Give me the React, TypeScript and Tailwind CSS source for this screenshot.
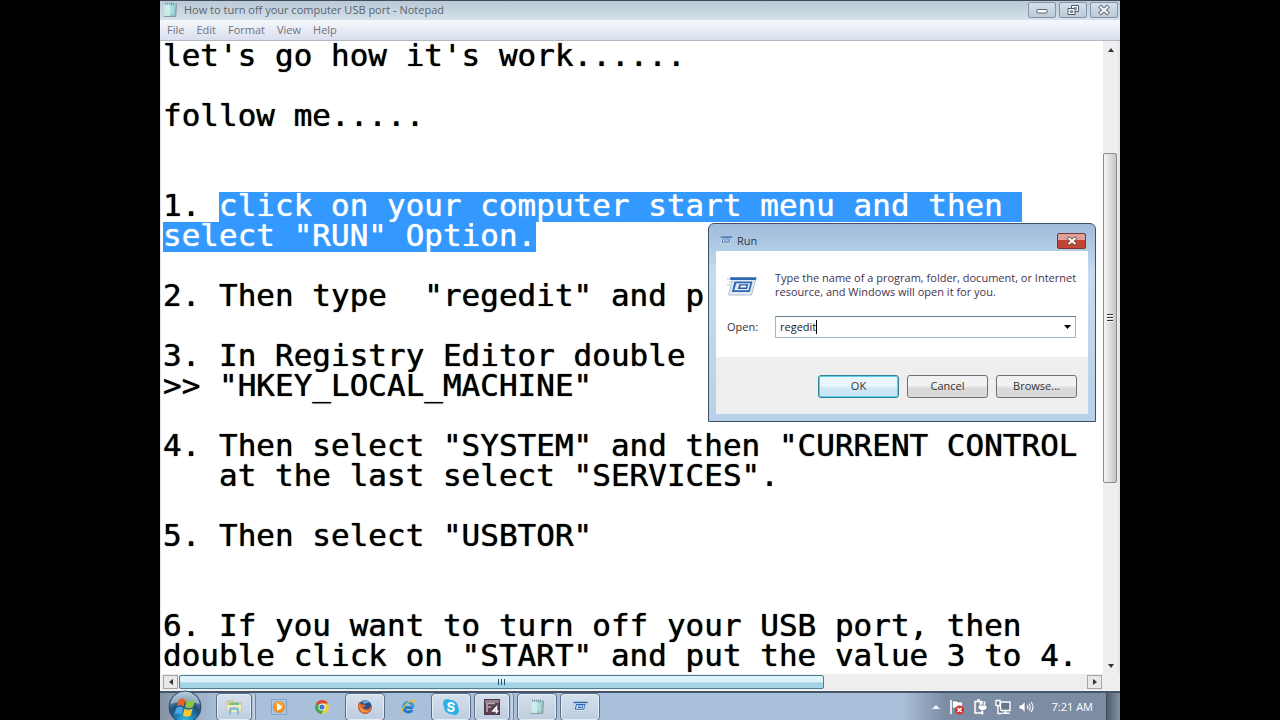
import type { ReactNode } from 'react';

const documentLines: ReactNode[] = [
  "let's go how it's work......",
  '',
  'follow me.....',
  '',
  '',
  <>
    1. <Selected>{'click on your computer start menu and then '}</Selected>
  </>,
  <Selected>select "RUN" Option.</Selected>,
  '',
  '2. Then type  "regedit" and p',
  '',
  '3. In Registry Editor double',
  '>> "HKEY_LOCAL_MACHINE"',
  '',
  '4. Then select "SYSTEM" and then "CURRENT CONTROL',
  '   at the last select "SERVICES".',
  '',
  '5. Then select "USBTOR"',
  '',
  '',
  '6. If you want to turn off your USB port, then',
  'double click on "START" and put the value 3 to 4.',
];

function Selected({ children }: { children: ReactNode }) {
  return <mark className="inline-block h-[30px] bg-[#3399ff] text-white">{children}</mark>;
}

function NotepadIcon({ className }: { className: string }) {
  return (
    <svg viewBox="0 0 16 16" className={className} aria-hidden="true">
      <path d="M2.500 1.500h12.500l-.8 13.500H1.500z" fill="#8b9a9f" />
      <path d="M2 1.500h11.500l-.5 12.500H1.500z" fill="#c3e8e8" />
      <path d="M8.500 1.500h5l-.5 12.500H8z" fill="#8ccdd0" />
      <path d="M3.500 5h8.500M3.400 7h8.500M3.300 9h8.500M3.200 11h8.500" stroke="#e6f7f6" strokeWidth=".7" />
      <path d="M3.500 .8v1.800M5.500 .8v1.800M7.500 .8v1.800M9.500 .8v1.800M11.500 .8v1.800" stroke="#5f7f86" strokeWidth=".8" />
    </svg>
  );
}

function RunIcon({ className }: { className: string }) {
  return (
    <svg viewBox="0 0 30 20" className={className} aria-hidden="true">
      <path d="M5.500 2.500H29L24.500 19H1.500z" fill="#e4eaf0" stroke="#9db4c4" strokeWidth=".8" />
      <path d="M0 3h5M1.500 6h3M0 9h3" stroke="#a9cbe4" />
      <path d="M3 1.200H29.500L28.800 4H3.500z" fill="#2f67ae" />
      <path d="M7.500 5.500H25.500L22.800 16H4.800z" fill="#2d68b4" />
      <path d="M9.300 7.200H23.300L21.500 14.300H7.200z" fill="#d6e8f8" />
      <path d="M12.300 8.300H21.200L20 12.900H11z" fill="#2c5ba2" />
      <path d="M13.800 9.600H19.400L18.900 11.600H13.200z" fill="#f4f9ff" />
    </svg>
  );
}

function ExplorerIcon() {
  return (
    <svg viewBox="0 0 18 18" className="h-[18px] w-[18px]" aria-hidden="true">
      <path d="M2 3h6l1 2h7v8H2z" fill="#e6dc9a" stroke="#b7ad6a" strokeWidth=".6" />
      <path d="M4 4.500h10v3H4z" fill="#7fbf86" />
      <path d="M1.500 7h15l-1 7h-13z" fill="#f1ebb8" />
      <path d="M5 16.500v-4q0-2 2-2h4q2 0 2 2v4" fill="none" stroke="#7fbcd8" strokeWidth="2.400" />
    </svg>
  );
}

function MediaIcon() {
  return (
    <svg viewBox="0 0 16 16" className="h-4 w-4" aria-hidden="true">
      <rect x=".5" y=".5" width="15" height="15" fill="#a8c6e4" stroke="#7fa3cb" />
      <circle cx="8" cy="8" r="6" fill="#ee8b1d" />
      <circle cx="8" cy="7" r="4.500" fill="#f7a63c" />
      <path d="M6 4l5.500 4L6 12z" fill="#fff" />
    </svg>
  );
}

function ChromeIcon() {
  return (
    <svg viewBox="0 0 16 16" className="h-4 w-4" aria-hidden="true">
      <circle cx="8" cy="8" r="7" fill="#f2cc35" />
      <path d="M8 8 1.900 4.500A7 7 0 0 1 14.100 4.500H8z" fill="#d9483b" />
      <path d="M1.900 4.500A7 7 0 0 0 7.500 15L10.500 9.500 8 8z" fill="#46a556" />
      <circle cx="8" cy="8" r="3.500" fill="#fff" />
      <circle cx="8" cy="8" r="2.600" fill="#3f78c4" />
    </svg>
  );
}

function FirefoxIcon() {
  return (
    <svg viewBox="0 0 16 16" className="h-4 w-4" aria-hidden="true">
      <circle cx="8" cy="8" r="6.800" fill="#2b4f86" />
      <path d="M5 3q4-3 8 1-3-1-5 1z" fill="#68a9d8" />
      <path d="M1.500 4Q0 9 3 12.500q4 4 9 1Q16 10 14.500 5q-.5 4-3.500 5-4 1-5-2l3-1q-1-2-4-1.500Q3 5 3 3z" fill="#e0662a" />
      <path d="M2 6q0 5 4 7 4 1 7-2-5 2-8-1Q3 8 2 6z" fill="#f3a33a" />
    </svg>
  );
}

function ExplorerBrowserIcon() {
  return (
    <svg viewBox="0 0 18 18" className="h-[18px] w-[18px]" aria-hidden="true">
      <path d="M14 9.700H4.800Q5.200 14 9.200 14q2.800 0 4-2" fill="none" stroke="#2479c6" strokeWidth="2.800" />
      <path d="M4.500 10Q4.500 4.500 9.200 4.500q4.800 0 4.800 5.200" fill="none" stroke="#3d98dc" strokeWidth="2.800" />
      <path d="M3.500 17q-4-1 .5-8 5-7 11-7.500 3.500 1 .5 5 .8-3-1.500-3-4 0-8 5-4 6-2.500 8.500z" fill="#e9bd3c" />
    </svg>
  );
}

function SkypeIcon() {
  return (
    <svg viewBox="0 0 18 18" className="h-[18px] w-[18px]" aria-hidden="true">
      <circle cx="9" cy="9" r="7" fill="#2bb1e4" />
      <circle cx="5.500" cy="5.500" r="4.500" fill="#2bb1e4" />
      <circle cx="12.500" cy="12.500" r="4.500" fill="#2bb1e4" />
      <path d="M12 6.500Q11 5 9 5 6.500 5 6.500 6.800T9 8.800t2.800 2Q11.800 13 9 13 6.800 13 6 11.300" fill="none" stroke="#fff" strokeWidth="2" strokeLinecap="round" />
    </svg>
  );
}

function FormatFactoryIcon() {
  return (
    <svg viewBox="0 0 16 16" className="h-4 w-4" aria-hidden="true">
      <rect x=".5" y=".5" width="15" height="15" fill="#5b4153" stroke="#4a3645" />
      <path d="M1 1h14v3H1z" fill="#937f8c" />
      <path d="M3 13V4.500H11M3 8H7" fill="none" stroke="#b9a3b1" strokeWidth="1.600" />
      <path d="M12.500 14.500V8L9 12H14.500" fill="none" stroke="#fff" strokeWidth="1.500" />
    </svg>
  );
}

function StartOrb() {
  return (
    <svg viewBox="0 0 34 34" className="h-[34px] w-[34px]" aria-hidden="true">
      <defs>
        <radialGradient id="orb" cx=".5" cy=".95" r=".9">
          <stop offset="0" stopColor="#2fc4ef" />
          <stop offset=".3" stopColor="#1f86bb" />
          <stop offset=".6" stopColor="#1d4f7c" />
          <stop offset="1" stopColor="#8ea6bd" />
        </radialGradient>
      </defs>
      <circle cx="17" cy="17" r="16" fill="url(#orb)" stroke="#2a4a68" />
      <path d="M2.500 14a14.700 14.700 0 0 1 29 0q-14.500-5-29 0z" fill="#dce8f2" opacity=".5" />
      <path d="M10.800 9.500q3.500-2.200 6.700.2L15.700 16.500q-3.500-2.500-7 0z" fill="#e8602c" />
      <path d="M18.700 10.300q4 2.200 8.300 0L25 17q-4 2.500-8 0z" fill="#8cc63f" />
      <path d="M8.300 18q3.500-2.500 7 0L13.500 25q-3.500-2.500-7 0z" fill="#4aa5e0" />
      <path d="M16.600 18.500q4 2.500 8 0L22.800 25.500q-4 2.500-8 0z" fill="#fbc733" />
    </svg>
  );
}

type TaskItem = { name: string; icon: ReactNode; open: boolean; stacked?: boolean };

const taskItems: TaskItem[] = [
  { name: 'Windows Explorer', icon: <ExplorerIcon />, open: true, stacked: true },
  { name: 'Media Player', icon: <MediaIcon />, open: false },
  { name: 'Chrome', icon: <ChromeIcon />, open: false },
  { name: 'Firefox', icon: <FirefoxIcon />, open: true },
  { name: 'Internet Explorer', icon: <ExplorerBrowserIcon />, open: false },
  { name: 'Skype', icon: <SkypeIcon />, open: true },
  { name: 'Format Factory', icon: <FormatFactoryIcon />, open: true, stacked: true },
  { name: 'Notepad', icon: <NotepadIcon className="h-4 w-4" />, open: true },
  { name: 'Run', icon: <RunIcon className="h-[11px] w-4" />, open: true },
];

function TaskButton({ item }: { item: TaskItem }) {
  const face = 'flex h-full min-w-0 flex-1 items-center justify-center';
  return (
    <button type="button" aria-label={item.name} className="flex h-7 w-10 gap-px">
      <span
        className={
          item.open
            ? `${face} rounded-sm border border-[#5d6d83] bg-linear-to-b from-[#d6e0ec] to-[#bccde0] shadow-[inset_0_0_0_1px_#e3ebf4]`
            : face
        }
      >
        {item.icon}
      </span>
      {item.stacked && <span className="h-full w-[3px] rounded-r-sm border-r border-[#6f8098] bg-[#c4d2e3]" />}
    </button>
  );
}

function TitleBar() {
  const button =
    'flex h-4 w-7 items-center justify-center rounded-xs border border-[#8495a8] bg-linear-to-b from-[#d3e0ea] to-[#bccbd9]';
  return (
    <header className="flex h-5 items-center border-t border-[#454b55] bg-linear-to-b from-[#b9c9d6] to-[#d4e1ea] pr-[2px] pb-px pl-[2px]">
      <NotepadIcon className="h-4 w-4" />
      <h1 className="ml-1.5 flex-1 text-[11px] leading-4 text-[#5d6269]">
        How to turn off your computer USB port - Notepad
      </h1>
      <div className="flex gap-[3px]">
        <button type="button" aria-label="Minimize" className={button}>
          <svg viewBox="0 0 12 12" className="h-3 w-3" aria-hidden="true">
            <rect x="1" y="5.500" width="10" height="3.500" rx=".5" fill="#fff" stroke="#5b6673" />
          </svg>
        </button>
        <button type="button" aria-label="Restore" className={button}>
          <svg viewBox="0 0 12 12" className="h-3 w-3" aria-hidden="true">
            <path d="M4.500 1.500h7v6h-7z" fill="#fff" stroke="#4d5866" />
            <path d="M7 3.500h2.500v2H7z" fill="#b8c6d4" stroke="#5b6673" strokeWidth=".7" />
            <path d="M1 4.500h7v6H1z" fill="#fff" stroke="#4d5866" />
            <path d="M3.300 6.700h2.400v1.800H3.300z" fill="#b8c6d4" stroke="#4d5866" strokeWidth=".8" />
          </svg>
        </button>
        <button type="button" aria-label="Close" className={button}>
          <svg viewBox="0 0 12 12" className="h-3 w-3" aria-hidden="true">
            <path d="M1.500 2l9 8M10.500 2l-9 8" stroke="#5b6673" strokeWidth="4" />
            <path d="M2 2.500l8 7M10 2.500l-8 7" stroke="#fff" strokeWidth="2.200" />
          </svg>
        </button>
      </div>
    </header>
  );
}

function VerticalScrollbar() {
  return (
    <div className="flex w-[15px] flex-col bg-[#eeeeee]">
      <div className="flex h-[17px] items-center justify-center">
        <svg viewBox="0 0 6 4" className="h-1 w-1.5" aria-hidden="true">
          <path d="M0 4 3 0l3 4z" fill="#333" />
        </svg>
      </div>
      <div className="flex flex-1 flex-col">
        <div className="h-[95px]" />
        <div className="flex h-[330px] w-[14px] items-center justify-center rounded-xs border border-[#8b8b8b] bg-linear-to-r from-[#f5f5f5] to-[#c6c6c6]">
          <div className="flex flex-col gap-px">
            <span className="h-[2px] w-1.5 border-t border-[#333] bg-white" />
            <span className="h-[2px] w-1.5 border-t border-[#333] bg-white" />
            <span className="h-[2px] w-1.5 border-t border-[#333] bg-white" />
          </div>
        </div>
      </div>
      <div className="flex h-[17px] items-center justify-center">
        <svg viewBox="0 0 6 4" className="h-1 w-1.5" aria-hidden="true">
          <path d="M0 0h6L3 4z" fill="#333" />
        </svg>
      </div>
    </div>
  );
}

function HorizontalScrollbar() {
  const arrow = 'flex h-[14px] w-[15px] items-center justify-center border border-[#a5a5a5] bg-[#e8e8e8]';
  return (
    <div className="flex h-4 items-center bg-[#eeeeee] pr-[18px] pl-[3px]">
      <button type="button" aria-label="Scroll left" className={arrow}>
        <svg viewBox="0 0 4 6" className="h-1.5 w-1" aria-hidden="true">
          <path d="M4 0v6L0 3z" fill="#333" />
        </svg>
      </button>
      <div className="flex h-full flex-1 items-center pl-px">
        <div className="flex h-[14px] w-[71%] items-center justify-center gap-[2px] rounded-xs border border-[#4d7d92] bg-linear-to-b from-[#e0f2fa] from-45% to-[#a5d3e6] to-60%">
          <span className="h-1.5 w-px bg-[#24506a]" />
          <span className="h-1.5 w-px bg-[#24506a]" />
          <span className="h-1.5 w-px bg-[#24506a]" />
        </div>
      </div>
      <button type="button" aria-label="Scroll right" className={arrow}>
        <svg viewBox="0 0 4 6" className="h-1.5 w-1" aria-hidden="true">
          <path d="M0 0v6l4-3z" fill="#333" />
        </svg>
      </button>
    </div>
  );
}

function RunDialog() {
  const button =
    'h-[23px] w-[81px] rounded-[3px] border pb-px text-[11px] leading-4 text-[#333] bg-linear-to-b from-45% to-60%';
  return (
    <section
      role="dialog"
      aria-label="Run"
      className="absolute top-[223px] left-[548px] w-[388px] rounded-t-md border border-[#3c5266] bg-linear-to-b from-[#a0bcda] via-[#c5dbf0] via-25% to-[#b8d0e8] px-[7px] pb-[7px]"
    >
      <header className="flex h-[27px] items-center pt-1.5 pr-[2px] pl-[3px]">
        <RunIcon className="h-[9px] w-[14px]" />
        <h2 className="ml-1 flex-1 text-[11px] leading-4 text-[#27364a]">Run</h2>
        <button
          type="button"
          aria-label="Close Run"
          className="flex h-4 w-[29px] items-center justify-center rounded-xs border border-[#7c3530] bg-linear-to-b from-[#dda19a] from-45% to-[#c14434] to-45%"
        >
          <svg viewBox="0 0 12 10" className="h-[10px] w-3" aria-hidden="true">
            <path d="M2 1.500l8 7M10 1.500l-8 7" stroke="#6e3b38" strokeWidth="3.600" />
            <path d="M2.500 2l7 6M9.500 2l-7 6" stroke="#fff" strokeWidth="2.200" />
          </svg>
        </button>
      </header>
      <form onSubmit={(event) => event.preventDefault()}>
        <div className="grid h-[106px] grid-cols-[48px_1fr] content-start bg-white pt-5 pr-[14px] pl-[11px]">
          <RunIcon className="mt-[5px] h-5 w-[30px]" />
          <p className="text-[11px] leading-[14px] whitespace-nowrap text-[#45324f]">
            Type the name of a program, folder, document, or Internet
            <br />
            resource, and Windows will open it for you.
          </p>
          <label htmlFor="open" className="mt-[17px] self-center text-[11px] leading-4 text-[#333]">
            Open:
          </label>
          <div className="mt-[17px] flex h-[22px] items-center border border-[#9fb8c6] border-t-[#5f7f92] bg-white pr-1 pb-px pl-1">
            <span className="flex flex-1 items-center">
              <input
                id="open"
                defaultValue="regedit"
                className="field-sizing-content bg-white text-[11px] leading-4 text-[#222] outline-none"
              />
              <span className="h-[14px] w-px bg-black" />
            </span>
            <button type="button" aria-label="Show recent commands">
              <svg viewBox="0 0 7 4" className="h-1 w-[7px]" aria-hidden="true">
                <path d="M0 0h7L3.500 4z" fill="#000" />
              </svg>
            </button>
          </div>
        </div>
        <div className="flex h-[57px] justify-end gap-2 bg-[#eeeeee] pt-[18px] pr-[11px]">
          <button
            type="submit"
            className={`${button} border-[#2f8099] from-[#eaf6fb] to-[#cbe7f3] shadow-[inset_0_0_0_1px_#57d0ee]`}
          >
            OK
          </button>
          <button type="button" className={`${button} border-[#707070] from-[#f1f1f1] to-[#d9d9d9]`}>
            Cancel
          </button>
          <button type="button" className={`${button} border-[#707070] from-[#f1f1f1] to-[#d9d9d9]`}>
            Browse...
          </button>
        </div>
      </form>
    </section>
  );
}

function TrayIcons() {
  return (
    <div className="flex items-center gap-[7px]">
      <svg viewBox="0 0 8 16" className="mr-[2px] h-4 w-2" aria-hidden="true">
        <path d="M0 10h8L4 6z" fill="#f2f6fa" />
      </svg>
      <svg viewBox="0 0 16 16" className="h-4 w-4" aria-hidden="true">
        <path d="M2 1v14" stroke="#fff" strokeWidth="1.600" />
        <path d="M3.500 2h5v1h5v7H9V9H3.500z" fill="#fff" stroke="#4d5a6a" strokeWidth=".5" />
        <circle cx="10.500" cy="11" r="4.500" fill="#d4302c" />
        <path d="M8.500 9l4 4M12.500 9l-4 4" stroke="#fff" strokeWidth="1.500" />
      </svg>
      <svg viewBox="0 0 16 16" className="h-4 w-4" aria-hidden="true">
        <path d="M4 2.500h6v11.500H3V2.500z" fill="#8291a4" stroke="#fff" strokeWidth="1.500" />
        <path d="M5 1h3" stroke="#fff" strokeWidth="1.500" />
        <path d="M6 6h9v2.500Q15 11.500 12 11.500H9.500Q6.500 11.500 6 8.500z" fill="#fff" stroke="#4a5665" strokeWidth=".7" />
        <path d="M8.500 2.500V6M12.500 2.500V6M10.500 11.500v4" stroke="#fff" strokeWidth="1.600" />
      </svg>
      <svg viewBox="0 0 16 16" className="h-4 w-4" aria-hidden="true">
        <path d="M5.500 3h9.500v8.500H5.500z" fill="#65788b" stroke="#fff" strokeWidth="1.400" />
        <path d="M7.500 14.200h7M10.500 11.500V14" stroke="#fff" strokeWidth="1.500" />
        <path d="M1 1.500v5h4v-5zM3 6.500v8h4" fill="#65788b" stroke="#fff" strokeWidth="1.400" />
      </svg>
      <svg viewBox="0 0 16 16" className="h-4 w-4" aria-hidden="true">
        <path d="M1 6h2.500L7 2.500v11L3.500 10H1z" fill="#fff" stroke="#4d5a6a" strokeWidth=".5" />
        <path d="M9 6q1.500 2 0 4M11 4.500q2.500 3.500 0 7M13 3q4 5 0 10" fill="none" stroke="#fff" strokeWidth="1.100" />
      </svg>
    </div>
  );
}

function Taskbar() {
  return (
    <footer className="flex h-[29px] items-center border-t-2 border-[#46566a] bg-[#a9c0da]">
      <div className="flex h-full flex-1 items-center bg-linear-to-r from-[#8693a3] to-[#a9c0da] to-8%">
        <button type="button" aria-label="Start" className="relative ml-2">
          <StartOrb />
        </button>
        <nav aria-label="Taskbar" className="ml-[14px] flex gap-[3px]">
          {taskItems.map((item) => (
            <TaskButton key={item.name} item={item} />
          ))}
        </nav>
      </div>
      <div className="flex h-full items-center bg-linear-to-r from-[#a9c0da] to-[#7c8da3] to-20% pl-[30px]">
        <TrayIcons />
        <time className="ml-[18px] text-[11px] leading-4 text-white">7:21 AM</time>
        <button
          type="button"
          aria-label="Show desktop"
          className="ml-[13px] h-full w-[14px] border-l border-[#3e4956] bg-linear-to-r from-[#515d6b] to-[#8392a3]"
        />
      </div>
    </footer>
  );
}

export default function App() {
  return (
    <div className="flex min-h-screen justify-center bg-black font-['Open_Sans','Noto_Sans',sans-serif]">
      <main className="relative flex h-screen w-3/4 flex-col overflow-hidden bg-white">
        <TitleBar />
        <nav
          aria-label="Menu"
          className="flex h-[21px] items-center gap-3 border-b border-[#b4b8c4] bg-linear-to-b from-[#f6f8fc] to-[#d9dfee] pl-[7px] text-[11px] leading-4 text-[#70747c]"
        >
          <a href="#file">File</a>
          <a href="#edit">Edit</a>
          <a href="#format">Format</a>
          <a href="#view">View</a>
          <a href="#help">Help</a>
        </nav>
        <div className="flex min-h-0 flex-1 border-r-2 border-l border-[#e3e5ea]">
          <article className="min-w-0 flex-1 overflow-hidden pt-px pl-[2px] font-['DejaVu_Sans_Mono',monospace] text-[31px] leading-[26px] text-black [text-shadow:0_0_1px_currentColor]">
            {documentLines.map((line, index) => (
              <div key={index} className="h-[30px] whitespace-pre">
                {line}
              </div>
            ))}
          </article>
          <VerticalScrollbar />
        </div>
        <HorizontalScrollbar />
        <div className="h-px bg-[#f4f4f4]" />
        <Taskbar />
        <RunDialog />
      </main>
    </div>
  );
}
